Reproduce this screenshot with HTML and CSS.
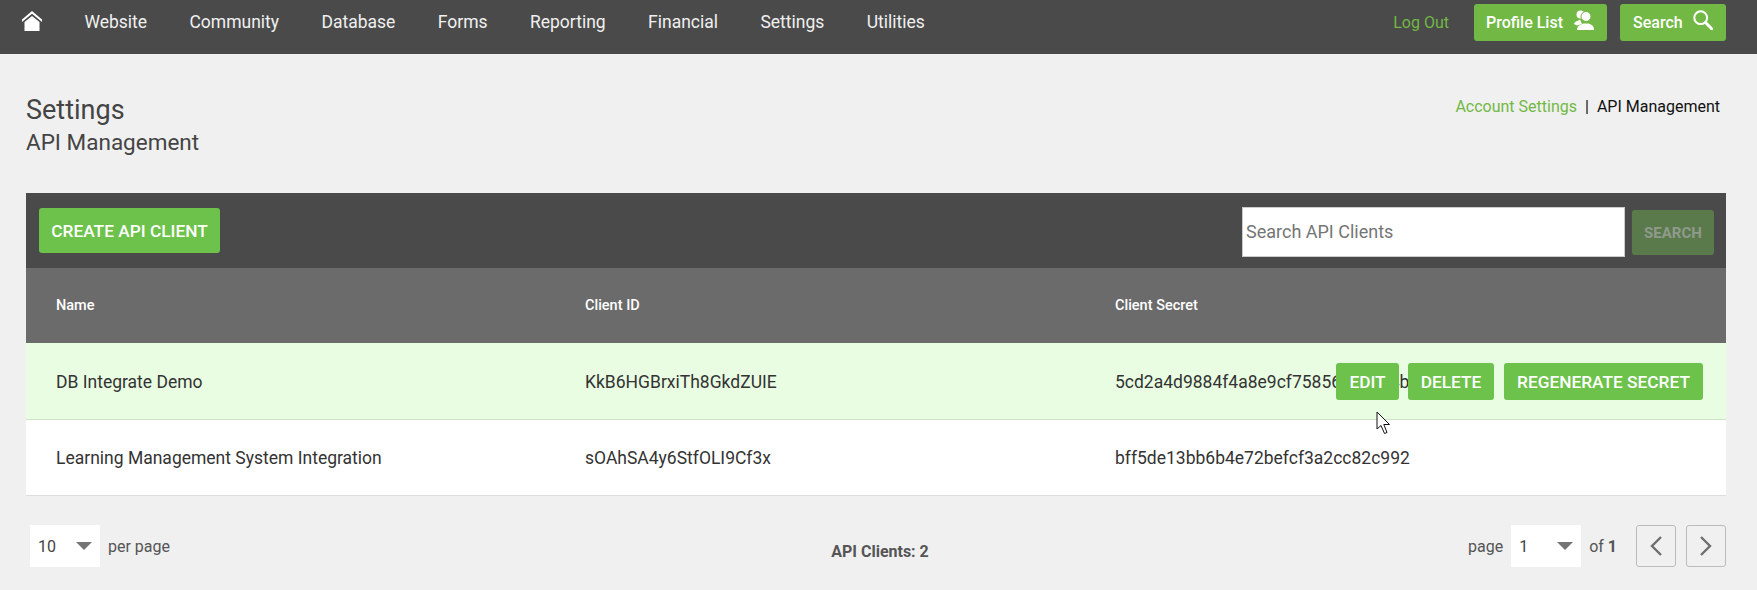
FILE: index.html
```html
<!DOCTYPE html>
<html lang="en">
<head>
<meta charset="utf-8">
<title>API Management</title>
<link rel="stylesheet" href="styles.css">
</head>
<body>
<header class="topbar">
  <nav class="nav">
    <a class="home" href="#" aria-label="Home">
      <svg width="20" height="20" viewBox="0 0 20 20"><path d="M10 0 L20 8.5 V11 L10 2.8 L0 11 V8.5 Z" fill="#fff"/><path d="M10 5 L17.5 11 V20 H2.5 V11 Z" fill="#fff"/></svg>
    </a>
    <a href="#">Website</a>
    <a href="#">Community</a>
    <a href="#">Database</a>
    <a href="#">Forms</a>
    <a href="#">Reporting</a>
    <a href="#">Financial</a>
    <a href="#">Settings</a>
    <a href="#">Utilities</a>
  </nav>
  <div class="top-actions">
    <a class="logout" href="#">Log Out</a>
    <a class="top-btn profile" href="#">Profile List
      <svg width="20" height="20" viewBox="0 0 20 20"><circle cx="6.5" cy="4.5" r="4" fill="#fff"/><path d="M0 14 C1 11 4 11 6 9.5 L8 14 L3 15.5 Z" fill="#fff"/><circle cx="12" cy="6.5" r="5" fill="#fff" stroke="#72b844" stroke-width="1"/><path d="M3 20 C3 16 6 14.5 9.5 13.5 H14.5 C18 14.5 20 16 20 20 Z" fill="#fff"/></svg>
    </a>
    <a class="top-btn search" href="#">Search
      <svg width="20" height="20" viewBox="0 0 20 20" fill="none" stroke="#fff"><circle cx="7.7" cy="7.7" r="6.4" stroke-width="2"/><path d="M12.5 12.5 L18.7 18.7" stroke-width="3" stroke-linecap="round"/></svg>
    </a>
  </div>
</header>

<main class="page">
  <div class="page-head">
    <div>
      <h1>Settings</h1>
      <h2>API Management</h2>
    </div>
    <div class="crumbs"><a href="#">Account Settings</a><span class="sep">|</span><span class="current">API Management</span></div>
  </div>

  <section class="panel">
    <div class="toolbar">
      <button class="btn create">CREATE API CLIENT</button>
      <div class="search-group">
        <input class="search-input" type="text" placeholder="Search API Clients">
        <button class="btn search-btn">SEARCH</button>
      </div>
    </div>
    <div class="row head">
      <div>Name</div><div>Client ID</div><div>Client Secret</div>
    </div>
    <div class="row hover">
      <div>DB Integrate Demo</div>
      <div>KkB6HGBrxiTh8GkdZUIE</div>
      <div>5cd2a4d9884f4a8e9cf75856e1d704b0</div>
      <div class="row-actions">
        <button class="btn edit">EDIT</button>
        <button class="btn delete">DELETE</button>
        <button class="btn regen">REGENERATE SECRET</button>
      </div>
    </div>
    <div class="row last">
      <div>Learning Management System Integration</div>
      <div>sOAhSA4y6StfOLI9Cf3x</div>
      <div>bff5de13bb6b4e72befcf3a2cc82c992</div>
    </div>
  </section>

  <footer class="pager">
    <div class="pager-side">
      <div class="select small"><span>10</span><i class="caret"></i></div>
      <span>per page</span>
    </div>
    <div class="total">API Clients: 2</div>
    <div class="pager-side right">
      <span>page</span>
      <div class="select"><span>1</span><i class="caret"></i></div>
      <span>of <b>1</b></span>
      <a class="page-btn first" href="#" aria-label="Previous"><svg width="12" height="20" viewBox="0 0 12 20" fill="none" stroke="#6f6f6f" stroke-width="2.4"><path d="M11 1 L2 10 L11 19"/></svg></a>
      <a class="page-btn" href="#" aria-label="Next"><svg width="12" height="20" viewBox="0 0 12 20" fill="none" stroke="#6f6f6f" stroke-width="2.4"><path d="M1 1 L10 10 L1 19"/></svg></a>
    </div>
  </footer>
</main>

<svg class="cursor" width="16" height="25" viewBox="0 0 16 25"><path d="M1 1 V18 L5 14.5 L8.5 22.5 L11 21.5 L7.8 13.5 L13.5 13.5 Z" fill="#fff" stroke="#111" stroke-width="1"/></svg>
</body>
</html>
```
FILE: styles.css
```css
* { box-sizing: border-box; }
html, body { margin: 0; padding: 0; }
body {
  background: #f0f0f0;
  font-family: Roboto, "Liberation Sans", sans-serif;
  font-size: 17.5px;
  color: #333;
  height: 590px;
  overflow: hidden;
  position: relative;
}
a { text-decoration: none; color: inherit; }

.topbar {
  height: 54px;
  background: #4a4a4a;
  display: flex;
  justify-content: space-between;
  align-items: flex-start;
  padding: 4px 31px 0 22px;
}
.nav {
  display: flex;
  align-items: center;
  height: 35px;
  gap: 42.4px;
  color: #f0f0f0;
}
.home { display: flex; margin-top: -2px; }
.top-actions { display: flex; align-items: center; }
.logout { color: #72b844; font-size: 16px; margin-right: 25px; }
.top-btn {
  height: 37px;
  background: #72b844;
  color: #fff;
  border-radius: 3px;
  display: flex;
  align-items: center;
  gap: 11px;
  font-size: 16px;
  font-weight: 500;
  padding: 0 12px;
}
.top-btn svg { margin-top: -5px; }
.profile { width: 133px; margin-right: 13px; }
.search { width: 106px; gap: 10px; padding-left: 13px; }

.page { padding: 0 31px 0 26px; }
.page-head {
  height: 139px;
  display: flex;
  justify-content: space-between;
  padding-top: 40px;
}
h1 { margin: 0; font-size: 27px; font-weight: 400; line-height: 32px; color: #444; }
h2 { margin: 2px 0 0; font-size: 22.5px; font-weight: 400; line-height: 28px; color: #444; }
.crumbs { font-size: 16px; line-height: 20px; padding: 3px 6px 0 0; color: #111; }
.crumbs a { color: #72b844; }
.sep { margin: 0 8px; }

.panel { background: #fff; }
.toolbar {
  height: 75px;
  background: #4a4a4a;
  display: flex;
  justify-content: space-between;
  align-items: center;
  padding: 0 12px 0 13px;
}
.btn {
  height: 37px;
  border: 0;
  border-radius: 3px;
  background: #6cc24a;
  color: #fff;
  font-family: inherit;
  font-size: 17.3px;
  font-weight: 500;
  padding: 0;
  white-space: nowrap;
}
.create { height: 45px; width: 181px; }
.search-group { display: flex; align-items: center; gap: 7px; padding-top: 2px; }
.search-input {
  width: 383px;
  height: 50px;
  border: 1px solid #ccc;
  background: #fff;
  font-family: inherit;
  font-size: 18px;
  padding: 0 3px;
  color: #333;
  outline: none;
}
.search-input::placeholder { color: #757575; opacity: 1; }
.search-btn {
  width: 82px;
  height: 45px;
  margin-top: 2px;
  font-size: 15px;
  font-weight: 700;
  background: #5a7a4b;
  color: #8f9a8c;
}

.row {
  display: grid;
  grid-template-columns: 529px 530px 1fr;
  align-items: center;
  padding-left: 30px;
  height: 76px;
  border-bottom: 1px solid #ddd;
  position: relative;
  white-space: nowrap;
  padding-top: 1px;
}
.head {
  height: 75px;
  background: #6b6b6b;
  color: #fff;
  font-size: 14.5px;
  font-weight: 500;
  border-bottom: 0;
  padding-top: 0;
}
.hover { background: #e9fde3; height: 77px; border-bottom-color: #cfe3c9; }
.last { background: #fff; }
.row-actions {
  position: absolute;
  right: 23px;
  top: 20px;
  display: flex;
  gap: 9px;
}
.edit { width: 63px; }
.delete { width: 86px; }
.regen { width: 199px; margin-left: 1px; }

.pager {
  display: grid;
  grid-template-columns: 1fr auto 1fr;
  align-items: center;
  padding: 29px 0 0 4px;
  font-size: 16px;
  color: #555;
}
.pager-side { display: flex; align-items: center; height: 42px; }
.pager-side.right { justify-content: flex-end; }
.select {
  width: 70px;
  height: 42px;
  background: #fff;
  display: flex;
  align-items: center;
  justify-content: space-between;
  padding: 0 8px;
  color: #444;
  margin-right: 8px;
}
.right .select { margin: 0 8px; }
.caret {
  width: 0;
  height: 0;
  border-left: 8px solid transparent;
  border-right: 8px solid transparent;
  border-top: 8px solid #757575;
}
.total { font-size: 16px; font-weight: 700; padding-top: 10px; margin-left: 4px; }
.page-btn {
  width: 40px;
  height: 42px;
  border: 1px solid #bbb;
  border-radius: 3px;
  display: flex;
  align-items: center;
  justify-content: center;
  margin-left: 10px;
}
.page-btn.first { margin-left: 19px; }

.cursor { position: absolute; left: 1376px; top: 411px; }
```
